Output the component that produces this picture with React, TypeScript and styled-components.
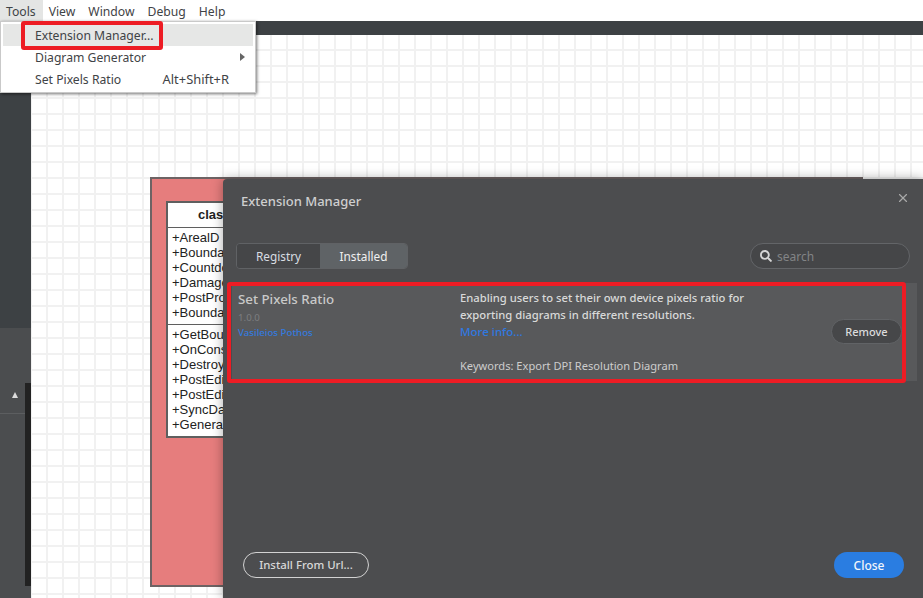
import React from 'react'
import styled, { createGlobalStyle } from 'styled-components'
import { X } from 'lucide-react'
import { FaSearch } from 'react-icons/fa'

const GlobalStyle = createGlobalStyle`
  html, body {
    margin: 0;
    height: 100%;
    overflow: hidden;
    background: #fff;
  }
  * {
    box-sizing: border-box;
  }
  body {
    font-family: "Noto Sans", "Open Sans", sans-serif;
  }
`

const Page = styled.div`
  display: grid;
  grid-template-columns: 31px 1fr;
  grid-template-rows: 21px 14px 1fr;
  height: 598px;
  overflow: hidden;
  position: relative;
  width: 923px;
`

const MenuBar = styled.div`
  background: #fff;
  display: flex;
  grid-column: 1 / 3;
  height: 21px;
`

const MenuItem = styled.div<{ $open?: boolean }>`
  background: ${(props) => (props.$open ? '#e4e5e4' : 'transparent')};
  color: #3f4346;
  font-size: 12.2px;
  height: 21px;
  line-height: 23px;
  padding: 0 7px 0 6px;
`

const Toolbar = styled.div`
  background: #3d4144;
  grid-column: 1 / 3;
`

const Sidebar = styled.div`
  display: grid;
  grid-template-rows: 293px 1fr;
`

const SidebarTop = styled.div`
  background: #3d4144;
`

const SidebarBottom = styled.div`
  background: #4b4d4f;
  display: flex;
  flex-direction: column;
`

const PanelHead = styled.div`
  align-items: center;
  border-bottom: 1px solid #5c5e60;
  display: flex;
  height: 86px;
  padding: 50px 0 0 12px;
`

const UpArrow = styled.span`
  border-bottom: 6px solid #dcdcdc;
  border-left: 3.5px solid transparent;
  border-right: 3.5px solid transparent;
  margin-top: -2px;
`

const DarkStrip = styled.div`
  align-self: flex-end;
  background: #222;
  height: 203px;
  margin-top: -31px;
  width: 6px;
`

const Canvas = styled.div`
  background-color: #fff;
  background-image:
    linear-gradient(#f1f1f1 2px, transparent 2px),
    linear-gradient(90deg, #f1f1f1 2px, transparent 2px);
  background-position: 15px -2px;
  background-size: 16px 16px;
  position: relative;
`

const Frame = styled.div`
  background: #e67d7d;
  border: 2px solid #6d6364;
  height: 410px;
  left: 119px;
  position: absolute;
  top: 142px;
  width: 713px;
`

const ClassBox = styled.div`
  background: #fff;
  border: 2px solid #5f5f5f;
  color: #222;
  font-family: "Liberation Sans", Arial, sans-serif;
  font-size: 13px;
  left: 14px;
  line-height: 15px;
  position: absolute;
  top: 22px;
  width: 170px;
`

const ClassTitle = styled.div`
  border-bottom: 1px solid #5f5f5f;
  font-weight: 700;
  height: 25px;
  line-height: 24px;
  padding-left: 30px;
`

const ClassSection = styled.div`
  padding: 2px 4px 4px;

  & + & {
    border-top: 1px solid #5f5f5f;
  }
`

const Menu = styled.div`
  background: #fff;
  border: 1px solid #c9c9c9;
  box-shadow: 1px 1px 3px rgba(0, 0, 0, 0.55);
  left: 0;
  padding: 2px;
  position: absolute;
  top: 21px;
  width: 256px;
`

const MenuRow = styled.div<{ $active?: boolean }>`
  align-items: center;
  background: ${(props) => (props.$active ? '#e6e7e6' : 'transparent')};
  color: #3f4346;
  display: flex;
  font-size: 12.2px;
  height: 22px;
  justify-content: space-between;
  padding: 0 9px 0 32px;
  position: relative;
  width: 250px;
`

const Shortcut = styled.span`
  font-size: 12.9px;
  margin-right: 15px;
`

const SubArrow = styled.span`
  border-bottom: 4px solid transparent;
  border-left: 5px solid #666;
  border-top: 4px solid transparent;
  margin-right: -1px;
`

const Highlight = styled.div<{ $menu?: boolean }>`
  border: 4px solid #ed1c24;
  border-radius: 3px;
  pointer-events: none;
  position: absolute;
  ${(props) =>
    props.$menu
      ? 'left: 21px; top: 21px; width: 142px; height: 29px;'
      : 'left: 4px; top: 103px; width: 679px; height: 101px;'}
`

const Dialog = styled.div`
  background: #4c4d4f;
  border-radius: 4px 0 0 0;
  box-shadow: 0 0 12px rgba(0, 0, 0, 0.35);
  color: #d4d4d4;
  display: flex;
  flex-direction: column;
  height: 419px;
  left: 223px;
  position: absolute;
  top: 179px;
  width: 700px;
`

const DialogHeader = styled.div`
  align-items: flex-start;
  display: flex;
  height: 64px;
  justify-content: space-between;
  padding: 13px 13px 0 18px;
`

const DialogTitle = styled.div`
  color: #cfcfcf;
  font-size: 13px;
  font-weight: 500;
  line-height: 18px;
`

const CloseIcon = styled(X)`
  color: #a9a9a9;
  margin-top: -1px;
`

const Controls = styled.div`
  align-items: center;
  display: flex;
  height: 26px;
  justify-content: space-between;
  margin: 0 13px;
`

const Tabs = styled.div`
  border: 1px solid #606265;
  border-radius: 4px;
  display: flex;
  height: 26px;
  overflow: hidden;
  width: 172px;
`

const Tab = styled.div<{ $active?: boolean }>`
  align-items: center;
  background: ${(props) => (props.$active ? '#5f6366' : '#454648')};
  color: ${(props) => (props.$active ? '#f0f0f0' : '#d8dde2')};
  display: flex;
  flex: ${(props) => (props.$active ? '1' : '0 0 83px')};
  font-size: 11.8px;
  justify-content: center;
`

const SearchBox = styled.div`
  align-items: center;
  background: #454648;
  border: 1px solid #636568;
  border-radius: 13px;
  color: #828486;
  display: flex;
  font-size: 12px;
  gap: 5px;
  height: 26px;
  padding-left: 9px;
  width: 160px;
`

const SearchIcon = styled(FaSearch)`
  color: #d6d6d6;
`

const ExtensionRow = styled.div`
  background: #58595b;
  display: grid;
  grid-template-columns: 222px 1fr 71px;
  height: 98px;
  margin: 14px 6px 0 9px;
  padding: 7px 15px 0 6px;
`

const ExtName = styled.div`
  color: #c9c9c9;
  font-size: 13.3px;
  font-weight: 500;
  line-height: 18px;
`

const ExtVersion = styled.div`
  color: #7d7e80;
  font-size: 9.7px;
  line-height: 14px;
  margin-top: 3px;
`

const ExtAuthor = styled.div`
  color: #3479de;
  font-size: 9.7px;
  font-weight: 500;
  line-height: 14px;
  margin-top: 1px;
`

const ExtDetails = styled.div`
  margin-top: -1px;
`

const ExtText = styled.div`
  color: #d9d9d9;
  font-size: 11.25px;
  font-weight: 500;
  line-height: 17px;
`

const MoreLink = styled.div`
  color: #2f78e0;
  font-size: 11.5px;
  font-weight: 500;
  line-height: 17px;
`

const Keywords = styled.div`
  color: #cdcdcd;
  font-size: 11.1px;
  line-height: 17px;
  margin-top: 17px;
`

const ActionCell = styled.div`
  padding-top: 29px;
`

const RemoveButton = styled.div`
  align-items: center;
  background: #464749;
  border: 1px solid #616366;
  border-radius: 13px;
  color: #dcdcdc;
  display: flex;
  font-size: 11px;
  font-weight: 500;
  height: 25px;
  justify-content: center;
  width: 71px;
`

const DialogFooter = styled.div`
  align-items: center;
  display: flex;
  justify-content: space-between;
  margin-top: auto;
  padding: 0 19px 20px 20px;
`

const OutlineButton = styled.div`
  align-items: center;
  border: 1px solid #d2d2d2;
  border-radius: 13px;
  color: #d8d8d8;
  display: flex;
  font-size: 11.4px;
  font-weight: 500;
  height: 26px;
  justify-content: center;
  padding-bottom: 2px;
  width: 126px;
`

const PrimaryButton = styled.div`
  align-items: center;
  background: #2a7de1;
  border-radius: 13px;
  color: #f2f6fb;
  display: flex;
  font-size: 12px;
  font-weight: 500;
  height: 26px;
  justify-content: center;
  width: 70px;
`

const attributes = ['+ArealD', '+Boundary', '+Countdown', '+Damage', '+PostProcess', '+Boundary']
const operations = ['+GetBounds', '+OnConstruct', '+Destroyed', '+PostEdit', '+PostEdit', '+SyncData', '+Generate']

export default function App() {
  return (
    <Page>
      <GlobalStyle />
      <MenuBar>
        <MenuItem $open>Tools</MenuItem>
        <MenuItem>View</MenuItem>
        <MenuItem>Window</MenuItem>
        <MenuItem>Debug</MenuItem>
        <MenuItem>Help</MenuItem>
      </MenuBar>
      <Toolbar />
      <Sidebar>
        <SidebarTop />
        <SidebarBottom>
          <PanelHead>
            <UpArrow />
          </PanelHead>
          <DarkStrip />
        </SidebarBottom>
      </Sidebar>
      <Canvas>
        <Frame>
          <ClassBox>
            <ClassTitle>class</ClassTitle>
            <ClassSection>
              {attributes.map((item, index) => (
                <div key={index}>{item}</div>
              ))}
            </ClassSection>
            <ClassSection>
              {operations.map((item, index) => (
                <div key={index}>{item}</div>
              ))}
            </ClassSection>
          </ClassBox>
        </Frame>
      </Canvas>
      <Menu>
        <MenuRow $active>Extension Manager...</MenuRow>
        <MenuRow>
          Diagram Generator
          <SubArrow />
        </MenuRow>
        <MenuRow>
          Set Pixels Ratio
          <Shortcut>Alt+Shift+R</Shortcut>
        </MenuRow>
      </Menu>
      <Highlight $menu />
      <Dialog>
        <DialogHeader>
          <DialogTitle>Extension Manager</DialogTitle>
          <CloseIcon size={14} />
        </DialogHeader>
        <Controls>
          <Tabs>
            <Tab>Registry</Tab>
            <Tab $active>Installed</Tab>
          </Tabs>
          <SearchBox>
            <SearchIcon size={12} />
            search
          </SearchBox>
        </Controls>
        <ExtensionRow>
          <div>
            <ExtName>Set Pixels Ratio</ExtName>
            <ExtVersion>1.0.0</ExtVersion>
            <ExtAuthor>Vasileios Pothos</ExtAuthor>
          </div>
          <ExtDetails>
            <ExtText>
              Enabling users to set their own device pixels ratio for
              <br />
              exporting diagrams in different resolutions.
            </ExtText>
            <MoreLink>More info...</MoreLink>
            <Keywords>Keywords: Export DPI Resolution Diagram</Keywords>
          </ExtDetails>
          <ActionCell>
            <RemoveButton>Remove</RemoveButton>
          </ActionCell>
        </ExtensionRow>
        <Highlight />
        <DialogFooter>
          <OutlineButton>Install From Url...</OutlineButton>
          <PrimaryButton>Close</PrimaryButton>
        </DialogFooter>
      </Dialog>
    </Page>
  )
}
